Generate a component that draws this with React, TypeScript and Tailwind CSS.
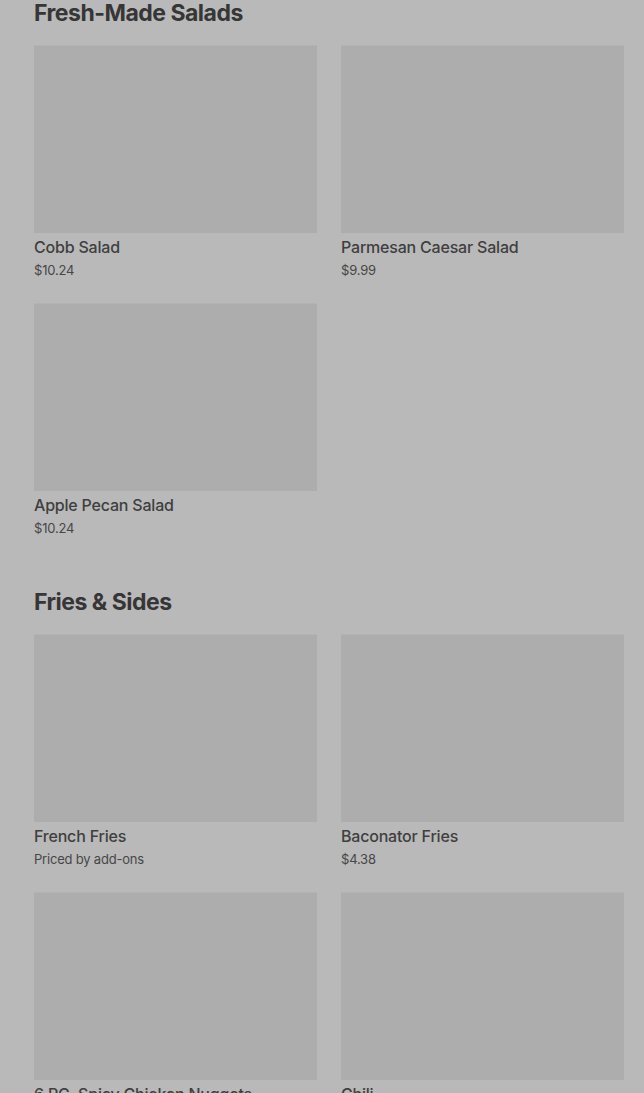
import React from "react";

type Item = { name: string; price: string };

const sections: { title: string; items: Item[] }[] = [
  {
    title: "Fresh-Made Salads",
    items: [
      { name: "Cobb Salad", price: "$10.24" },
      { name: "Parmesan Caesar Salad", price: "$9.99" },
      { name: "Apple Pecan Salad", price: "$10.24" },
    ],
  },
  {
    title: "Fries & Sides",
    items: [
      { name: "French Fries", price: "Priced by add-ons" },
      { name: "Baconator Fries", price: "$4.38" },
      { name: "6 PC. Spicy Chicken Nuggets", price: "$3.49" },
      { name: "Chili", price: "$4.19" },
    ],
  },
];

function MenuCard({ item }: { item: Item }) {
  return (
    <div>
      <div className="h-[188px] w-full bg-[#adadad] border-t border-[#b3b3b3]" />
      <p className="mt-[4px] text-[16px] leading-[20px] font-medium tracking-[-0.2px] text-[#3f3f3f]">
        {item.name}
      </p>
      <p className="mt-[4px] text-[13px] leading-[18px] tracking-[-0.2px] text-[#474747]">
        {item.price}
      </p>
    </div>
  );
}

export default function App() {
  return (
    <div
      className="h-[1093px] overflow-hidden bg-[#b9b9b9] pl-[34px]"
      style={{ fontFamily: "Inter, 'Noto Sans', sans-serif" }}
    >
      <div className="-mt-px">
        {sections.map((section, i) => (
          <section key={section.title} className={i > 0 ? "mt-[51px]" : ""}>
            <h2 className="text-[23px] leading-[28px] font-bold tracking-[-0.5px] text-[#363636]">
              {section.title}
            </h2>
            <div className="mt-[18px] grid w-[590px] grid-cols-2 gap-x-[24px] gap-y-[24px]">
              {section.items.map((item) => (
                <MenuCard key={item.name} item={item} />
              ))}
            </div>
          </section>
        ))}
      </div>
    </div>
  );
}
